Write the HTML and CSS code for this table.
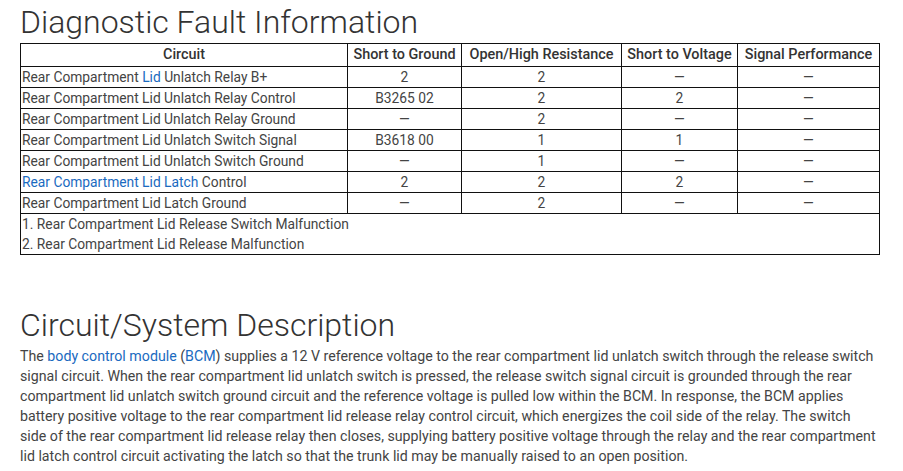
FILE: index.html
```html
<!DOCTYPE html>
<html>
<head>
<meta charset="utf-8">
<link rel="stylesheet" href="styles.css">
</head>
<body>
<section class="section">
  <h1 class="title">Diagnostic Fault Information</h1>
  <table class="dtc">
    <colgroup>
      <col class="c1"><col class="c2"><col class="c3"><col class="c4"><col class="c5">
    </colgroup>
    <thead>
      <tr><th>Circuit</th><th>Short to Ground</th><th>Open/High Resistance</th><th>Short to Voltage</th><th>Signal Performance</th></tr>
    </thead>
    <tbody>
      <tr><td class="name">Rear Compartment <a href="#">Lid</a> Unlatch Relay B+</td><td>2</td><td>2</td><td>—</td><td>—</td></tr>
      <tr><td class="name">Rear Compartment Lid Unlatch Relay Control</td><td>B3265 02</td><td>2</td><td>2</td><td>—</td></tr>
      <tr><td class="name">Rear Compartment Lid Unlatch Relay Ground</td><td>—</td><td>2</td><td>—</td><td>—</td></tr>
      <tr><td class="name">Rear Compartment Lid Unlatch Switch Signal</td><td>B3618 00</td><td>1</td><td>1</td><td>—</td></tr>
      <tr><td class="name">Rear Compartment Lid Unlatch Switch Ground</td><td>—</td><td>1</td><td>—</td><td>—</td></tr>
      <tr><td class="name"><a href="#">Rear Compartment Lid Latch</a> Control</td><td>2</td><td>2</td><td>2</td><td>—</td></tr>
      <tr><td class="name">Rear Compartment Lid Latch Ground</td><td>—</td><td>2</td><td>—</td><td>—</td></tr>
      <tr><td class="notes" colspan="5"><div>1. Rear Compartment Lid Release Switch Malfunction</div><div>2. Rear Compartment Lid Release Malfunction</div></td></tr>
    </tbody>
  </table>
</section>
<section class="section desc">
  <h1 class="title">Circuit/System Description</h1>
  <p class="para">The <a href="#">body control module</a> (<a href="#">BCM</a>) supplies a 12 V reference voltage to the rear compartment lid unlatch switch through the release switch signal circuit. When the rear compartment lid unlatch switch is pressed, the release switch signal circuit is grounded through the rear compartment lid unlatch switch ground circuit and the reference voltage is pulled low within the BCM. In response, the BCM applies battery positive voltage to the rear compartment lid release relay control circuit, which energizes the coil side of the relay. The switch side of the rear compartment lid release relay then closes, supplying battery positive voltage through the relay and the rear compartment lid latch control circuit activating the latch so that the trunk lid may be manually raised to an open position.</p>
</section>
</body>
</html>
```
FILE: styles.css
```css
html, body {
  margin: 0;
  padding: 0;
  background: #fff;
}
body {
  padding: 1px 24px 0 20px;
  font-family: Roboto, "Liberation Sans", sans-serif;
  font-size: 13.8px;
  color: #444;
}
a {
  color: #1a6ac0;
  text-decoration: none;
}
.title {
  margin: 0;
  font-weight: 300;
  font-size: 32px;
  line-height: 42px;
  color: #333;
}
.dtc {
  width: 859px;
  border-collapse: collapse;
  table-layout: fixed;
  line-height: 20px;
}
.c1 { width: 327px; }
.c2 { width: 114px; }
.c3 { width: 160px; }
.c4 { width: 116px; }
.c5 { width: 142px; }
.dtc th, .dtc td {
  border: 1px solid #111;
  padding: 0;
  text-align: center;
  white-space: nowrap;
}
.dtc th {
  font-weight: 500;
  font-size: 14.4px;
  color: #333;
  height: 22px;
}
.dtc td {
  height: 20px;
}
.dtc td.name, .dtc td.notes {
  text-align: left;
  padding-left: 1px;
}
.dtc td.notes {
  height: 40px;
}
.desc {
  margin-top: 49px;
}
.para {
  margin: 0;
  font-size: 14.2px;
  line-height: 20px;
  width: 858px;
}
```
